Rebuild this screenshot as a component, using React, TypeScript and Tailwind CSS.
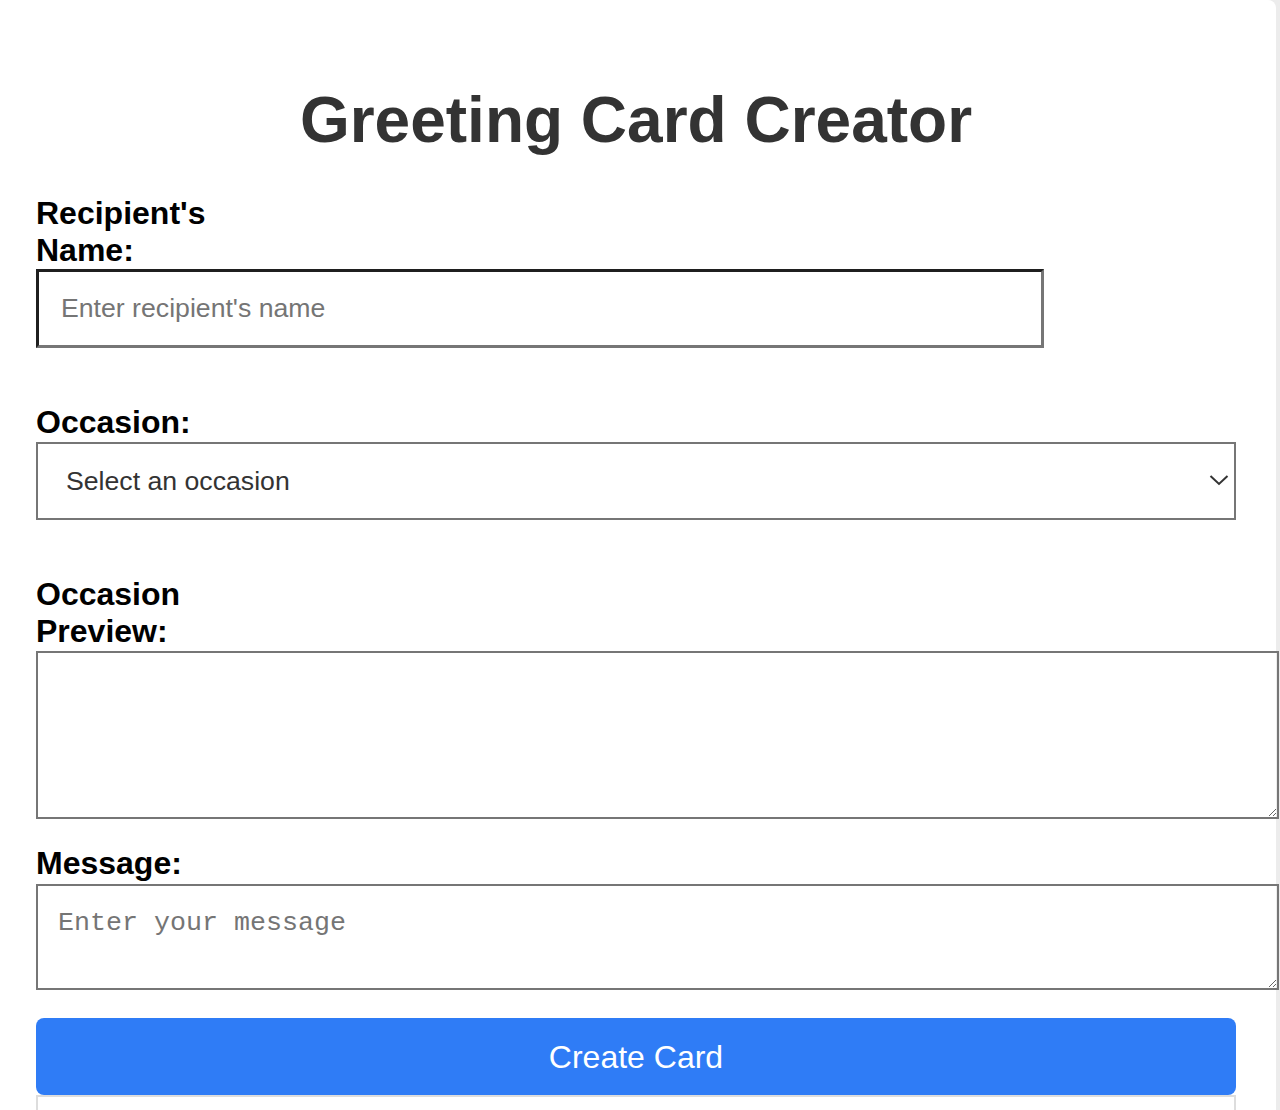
import React from 'react';

const labelCls =
  "block w-[200px] text-[32px] leading-[37px] font-bold text-black";

const App = () => {
  const [name, setName] = React.useState('');
  const [occasion, setOccasion] = React.useState('');
  const [message, setMessage] = React.useState('');

  return (
    <div className="min-h-[1110px] bg-[#ececec] font-['Liberation_Sans',Arial,sans-serif]">
      <div className="w-[1276px] min-h-[1110px] bg-white rounded-tr-[8px] pl-[36px] pt-[83px]">
        <div className="w-[1200px]">
          <h1 className="text-[64px] leading-[74px] font-bold text-[#333] text-center mb-[38px]">
            Greeting Card Creator
          </h1>

          {/* Recipient */}
          <label className={labelCls}>Recipient's Name:</label>
          <input
            type="text"
            value={name}
            onChange={(e) => setName(e.target.value)}
            placeholder="Enter recipient's name"
            className="block w-[1008px] h-[79px] border-[3px] border-solid border-t-[#1f1f1f] border-l-[#1f1f1f] border-b-[#767676] border-r-[#767676] pl-[22px] text-[26.67px] text-black placeholder:text-[#757575] outline-none"
          />

          {/* Occasion */}
          <label className={`${labelCls} mt-[56px]`}>Occasion:</label>
          <div className="relative mt-[1px]">
            <select
              value={occasion}
              onChange={(e) => setOccasion(e.target.value)}
              className="block w-[1200px] h-[78px] appearance-none border-2 border-[#767676] bg-white pl-[28px] text-[26.67px] text-[#333] outline-none"
            >
              <option value="">Select an occasion</option>
              <option value="birthday">Birthday</option>
              <option value="anniversary">Anniversary</option>
              <option value="holiday">Holiday</option>
            </select>
            <svg
              className="absolute right-[7px] top-[32px] pointer-events-none"
              width="20"
              height="12"
              viewBox="0 0 20 12"
              fill="none"
            >
              <path d="M1.5 2 L10 10 L18.5 2" stroke="#333" strokeWidth="2" />
            </svg>
          </div>

          {/* Preview */}
          <label className={`${labelCls} mt-[56px]`}>Occasion Preview:</label>
          <textarea
            readOnly
            className="block mt-[1px] w-[1243px] h-[168px] border-2 border-[#767676] p-[20px] font-['Liberation_Mono',monospace] text-[26.67px] outline-none"
          />

          {/* Message */}
          <label className={`${labelCls} mt-[26px]`}>Message:</label>
          <textarea
            value={message}
            onChange={(e) => setMessage(e.target.value)}
            placeholder="Enter your message"
            className="block mt-[2px] w-[1243px] h-[106px] border-2 border-[#767676] px-[20px] pt-[22px] pb-[18px] font-['Liberation_Mono',monospace] text-[26.67px] leading-[30px] placeholder:text-[#757575] outline-none"
          />

          <button className="block mt-[28px] w-[1200px] h-[77px] rounded-[8px] bg-[#2f7cf6] text-white text-[32px]">
            Create Card
          </button>

          <div className="w-[1200px] h-[60px] border-2 border-b-0 border-[#dddddd]" />
        </div>
      </div>
    </div>
  );
};

export default App;
